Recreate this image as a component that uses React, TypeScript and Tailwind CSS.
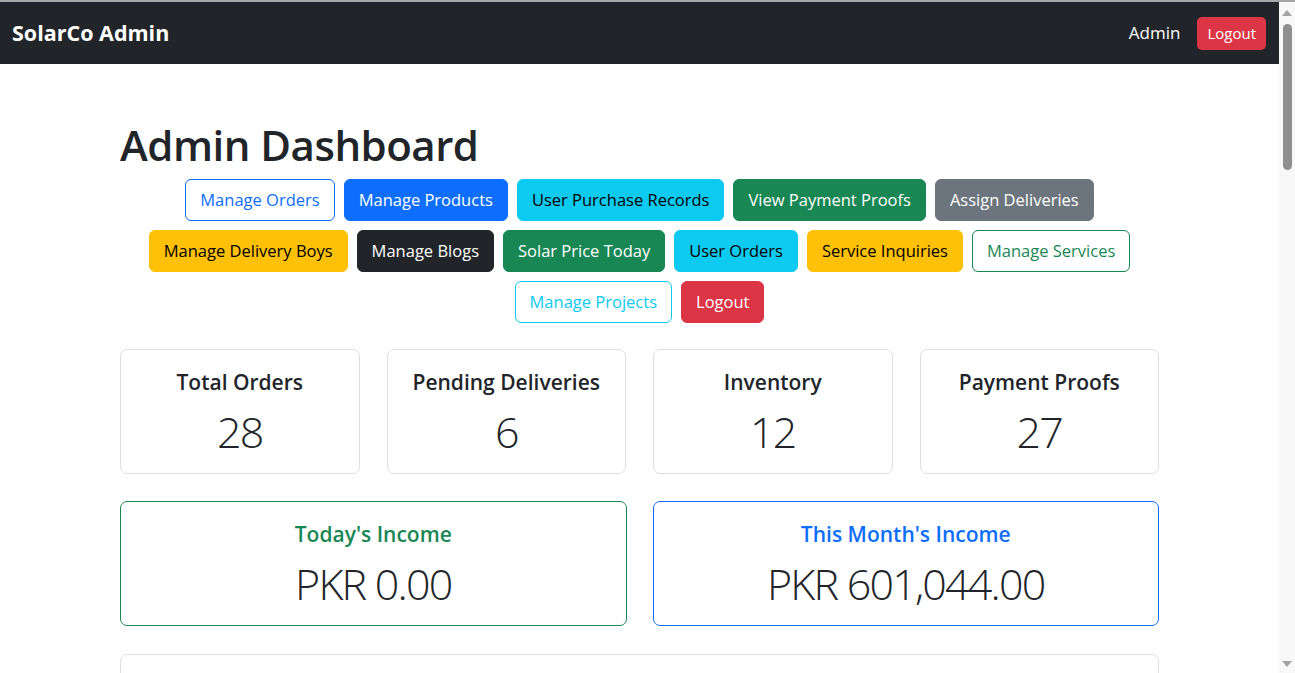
import React from "react";

interface NavButton {
  label: string;
  style: string;
}

interface Stat {
  title: string;
  value: string;
}

const buttonRows: NavButton[][] = [
  [
    { label: "Manage Orders", style: "border-[#0d6efd] text-[#0d6efd] bg-white" },
    { label: "Manage Products", style: "border-[#0d6efd] bg-[#0d6efd] text-white" },
    { label: "User Purchase Records", style: "border-[#0dcaf0] bg-[#0dcaf0] text-black" },
    { label: "View Payment Proofs", style: "border-[#198754] bg-[#198754] text-white" },
    { label: "Assign Deliveries", style: "border-[#6c757d] bg-[#6c757d] text-white" },
  ],
  [
    { label: "Manage Delivery Boys", style: "border-[#ffc107] bg-[#ffc107] text-black" },
    { label: "Manage Blogs", style: "border-[#212529] bg-[#212529] text-white" },
    { label: "Solar Price Today", style: "border-[#198754] bg-[#198754] text-white" },
    { label: "User Orders", style: "border-[#0dcaf0] bg-[#0dcaf0] text-black" },
    { label: "Service Inquiries", style: "border-[#ffc107] bg-[#ffc107] text-black" },
    { label: "Manage Services", style: "border-[#198754] text-[#198754] bg-white" },
  ],
  [
    { label: "Manage Projects", style: "border-[#0dcaf0] text-[#0dcaf0] bg-white" },
    { label: "Logout", style: "border-[#dc3545] bg-[#dc3545] text-white" },
  ],
];

const stats: Stat[] = [
  { title: "Total Orders", value: "28" },
  { title: "Pending Deliveries", value: "6" },
  { title: "Inventory", value: "12" },
  { title: "Payment Proofs", value: "27" },
];

const Scrollbar: React.FC = () => (
  <div className="w-[16px] bg-[#f8f8f8] flex flex-col items-center">
    <svg width="10" height="6" viewBox="0 0 10 6" className="mt-[8px]">
      <polygon points="5,0 10,6 0,6" fill="#a3a3a3" />
    </svg>
    <div className="mt-[8px] w-[9px] h-[146px] rounded-full bg-[#8f8f8f]" />
    <div className="flex-1" />
    <svg width="10" height="6" viewBox="0 0 10 6" className="mb-[6px]">
      <polygon points="0,0 10,0 5,6" fill="#a3a3a3" />
    </svg>
  </div>
);

const App: React.FC = () => {
  return (
    <div className="h-[673px] overflow-hidden flex flex-col bg-white text-[#212529] font-['Open_Sans','Noto_Sans',sans-serif]">
      <div className="h-[2px] bg-[#a6a6a6]" />
      <div className="flex flex-1 min-h-0">
        <div className="flex-1 min-w-0">
          {/* Top navbar */}
          <nav className="h-[62px] bg-[#212529] flex items-center justify-between pl-[12px] pr-[13px]">
            <span className="text-white font-bold text-[21.5px]">SolarCo Admin</span>
            <div className="flex items-center gap-[17px]">
              <span className="text-white text-[17px]">Admin</span>
              <button className="bg-[#dc3545] text-white text-[15px] rounded-[5px] px-[10px] h-[33px]">
                Logout
              </button>
            </div>
          </nav>

          <main className="w-[1039px] mx-auto">
            <h1 className="mt-[56px] text-[42px] leading-[50px] font-semibold tracking-[-0.5px]">
              Admin Dashboard
            </h1>

            {/* Action buttons */}
            <div className="mt-[9px] flex flex-col items-center gap-[9px]">
              {buttonRows.map((row, i) => (
                <div key={i} className="flex gap-[9px]">
                  {row.map((b) => (
                    <button
                      key={b.label}
                      className={`h-[42px] px-[14px] border rounded-[6px] text-[16.5px] whitespace-nowrap ${b.style}`}
                    >
                      {b.label}
                    </button>
                  ))}
                </div>
              ))}
            </div>

            {/* Stat cards */}
            <div className="mt-[26px] grid grid-cols-4 gap-[27px]">
              {stats.map((s) => (
                <div
                  key={s.title}
                  className="h-[125px] border border-[#dfdfdf] rounded-[7px] flex flex-col items-center pt-[20px]"
                >
                  <div className="text-[21px] leading-[25px] font-semibold">{s.title}</div>
                  <div className="mt-[11px] text-[43px] leading-[52px] font-light tracking-[-1.8px]">
                    {s.value}
                  </div>
                </div>
              ))}
            </div>

            {/* Income cards */}
            <div className="mt-[27px] grid grid-cols-2 gap-[26px]">
              <div className="h-[125px] border border-[#198754] rounded-[7px] flex flex-col items-center pt-[20px]">
                <div className="text-[21px] leading-[25px] font-semibold text-[#198754]">Today's Income</div>
                <div className="mt-[11px] text-[43px] leading-[52px] font-light tracking-[-1.8px]">PKR 0.00</div>
              </div>
              <div className="h-[125px] border border-[#0d6efd] rounded-[7px] flex flex-col items-center pt-[20px]">
                <div className="text-[21px] leading-[25px] font-semibold text-[#0d6efd]">This Month's Income</div>
                <div className="mt-[11px] text-[43px] leading-[52px] font-light tracking-[-1.8px]">
                  PKR 601,044.00
                </div>
              </div>
            </div>

            {/* Next section (cut off) */}
            <div className="mt-[28px] h-[120px] border border-[#dfdfdf] rounded-[7px]" />
          </main>
        </div>
        <Scrollbar />
      </div>
    </div>
  );
};

export default App;
